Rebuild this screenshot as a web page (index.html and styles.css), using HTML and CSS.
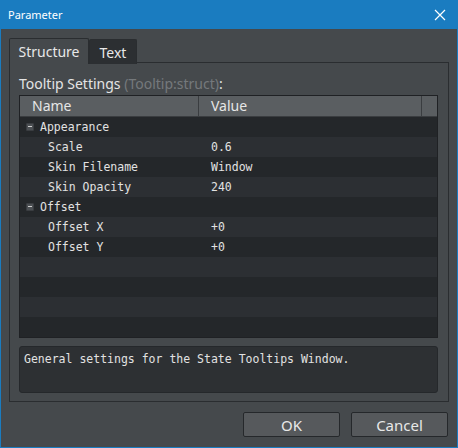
FILE: index.html
```html
<!DOCTYPE html>
<html>
<head>
<meta charset="utf-8">
<link rel="stylesheet" href="styles.css">
</head>
<body>
<div class="window">
  <div class="titlebar">
    <span class="title">Parameter</span>
    <svg class="close" width="12" height="12" viewBox="0 0 12 12"><path d="M1 1L11 11M11 1L1 11" stroke="#fff" stroke-width="1.2" fill="none"/></svg>
  </div>
  <div class="content">
    <div class="tabs">
      <div class="tab active">Structure</div>
      <div class="tab">Text</div>
    </div>
    <div class="panel">
      <div class="label">Tooltip Settings <span class="muted">(Tooltip:struct)</span>:</div>
      <div class="table">
        <div class="thead">
          <div class="th c1">Name</div>
          <div class="th c2">Value</div>
          <div class="th c3"></div>
        </div>
        <div class="row"><div class="cell c1 group"><span class="minus"></span>Appearance</div><div class="cell c2"></div></div>
        <div class="row"><div class="cell c1 child">Scale</div><div class="cell c2">0.6</div></div>
        <div class="row"><div class="cell c1 child">Skin Filename</div><div class="cell c2">Window</div></div>
        <div class="row"><div class="cell c1 child">Skin Opacity</div><div class="cell c2">240</div></div>
        <div class="row"><div class="cell c1 group"><span class="minus"></span>Offset</div><div class="cell c2"></div></div>
        <div class="row"><div class="cell c1 child">Offset X</div><div class="cell c2">+0</div></div>
        <div class="row"><div class="cell c1 child">Offset Y</div><div class="cell c2">+0</div></div>
        <div class="row"></div>
        <div class="row"></div>
        <div class="row"></div>
        <div class="row"></div>
      </div>
      <div class="desc">General settings for the State Tooltips Window.</div>
    </div>
    <div class="buttons">
      <div class="btn">OK</div>
      <div class="btn">Cancel</div>
    </div>
  </div>
</div>
</body>
</html>
```
FILE: styles.css
```css
html, body {
  margin: 0;
  padding: 0;
  background: #45494c;
}
.window {
  width: 458px;
  height: 448px;
  box-sizing: border-box;
  border: 1px solid #1a7cc0;
  border-top: 0;
  background: #45494c;
  display: flex;
  flex-direction: column;
  font-family: "Noto Sans", "Open Sans", sans-serif;
  color: #e4e4e4;
}
.titlebar {
  height: 29px;
  background: #1a7cc0;
  margin: 0 -1px;
  padding: 0 12px 0 8px;
  display: flex;
  align-items: center;
  justify-content: space-between;
  flex-shrink: 0;
}
.title {
  font-size: 11px;
  color: #fff;
}
.close {
  display: block;
}
.content {
  flex: 1;
  padding: 9px 8px 0 8px;
  display: flex;
  flex-direction: column;
}
.tabs {
  display: flex;
  height: 25px;
  position: relative;
  z-index: 1;
  margin-bottom: -1px;
}
.tab {
  box-sizing: border-box;
  height: 25px;
  border: 1px solid #2a2d30;
  border-bottom: 0;
  border-radius: 2px 2px 0 0;
  background: #2c2f32;
  font-size: 14px;
  display: flex;
  align-items: center;
  justify-content: center;
  width: 48px;
  color: #e8e8e8;
  margin-top: 1px;
}
.tab.active {
  width: 80px;
  background: #45494c;
  height: 26px;
  margin-top: 0;
  border-bottom: 0;
  color: #e8e8e8;
}
.panel {
  box-sizing: border-box;
  height: 340px;
  border: 1px solid #2a2d30;
  padding: 10px 10px 0 9px;
  display: flex;
  flex-direction: column;
}
.label {
  font-size: 14px;
  line-height: 16px;
  height: 16px;
  margin-top: 3px;
  color: #e4e4e4;
  margin-bottom: 3px;
}
.muted {
  color: #75797c;
}
.table {
  border: 1px solid #1f2124;
  background: #272a2d;
}
.thead {
  display: flex;
  height: 20px;
  background: #5a5e61;
  border-bottom: 1px solid #3a3d40;
}
.th {
  box-sizing: border-box;
  font-size: 14px;
  line-height: 20px;
  padding-left: 12px;
  color: #e6e6e6;
}
.c1 {
  width: 179px;
  flex-shrink: 0;
}
.th.c1 {
  border-right: 1px solid #3a3d40;
}
.th.c2 {
  width: 223px;
  border-right: 1px solid #3a3d40;
}
.th.c3 {
  flex: 1;
}
.row {
  display: flex;
  height: 20px;
  background: #24272a;
  font-family: "DejaVu Sans Mono", "Liberation Mono", monospace;
  font-size: 11.5px;
  line-height: 20px;
  color: #e2e2e2;
}
.row:nth-child(odd) {
  background: #2c2f33;
}
.cell {
  box-sizing: border-box;
}
.cell.c2 {
  padding-left: 12px;
}
.group {
  display: flex;
  align-items: center;
  padding-left: 6px;
}
.child {
  padding-left: 28px;
}
.minus {
  width: 8px;
  height: 8px;
  box-sizing: border-box;
  border: 1px solid #3a3d41;
  background: #4b4f53;
  border-radius: 1px;
  margin-right: 6px;
  position: relative;
}
.minus::after {
  content: "";
  position: absolute;
  left: 1px;
  right: 1px;
  top: 2px;
  height: 1px;
  background: #d0d0d0;
}
.desc {
  margin-top: 8px;
  height: 47px;
  box-sizing: border-box;
  border: 1px solid #25282b;
  border-radius: 3px;
  background: #2d3033;
  padding: 4px 4px;
  font-family: "DejaVu Sans Mono", "Liberation Mono", monospace;
  font-size: 11.5px;
  line-height: 16px;
  color: #e2e2e2;
}
.buttons {
  display: flex;
  justify-content: flex-end;
  gap: 11px;
  margin-top: 10px;
  padding-right: 1px;
}
.btn {
  width: 97px;
  height: 25px;
  box-sizing: border-box;
  border: 1px solid #25282b;
  border-radius: 2px;
  background: #56595c;
  display: flex;
  align-items: center;
  justify-content: center;
  font-size: 15px;
  color: #e8e8e8;
}
```
